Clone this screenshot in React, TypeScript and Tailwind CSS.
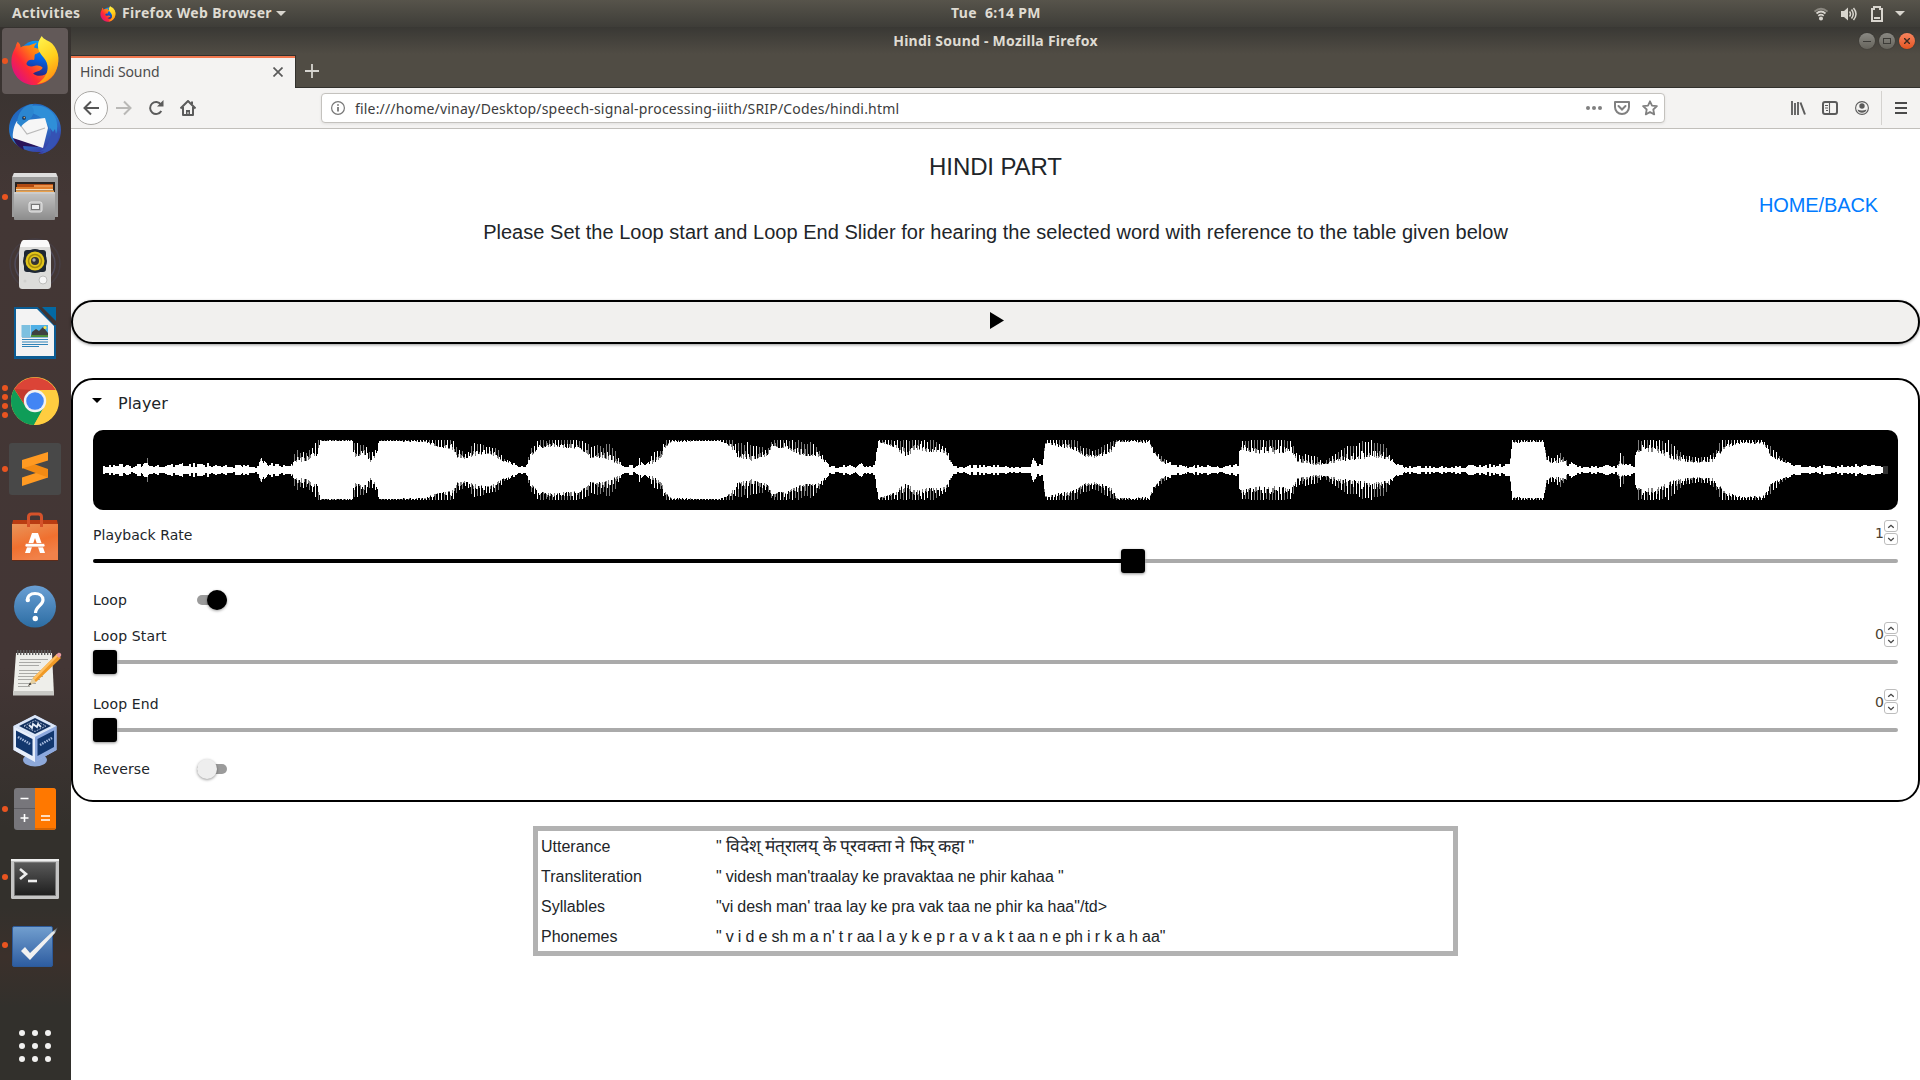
import React from "react";

const UI = "font-['Noto_Sans',sans-serif]";
const DJ = "font-['DejaVu_Sans',sans-serif]";

/* ---------- waveform ---------- */

// [x, body half-height, peak half-height]
const ENVELOPE: [number, number, number][] = [
  [10, 3, 5], [30, 2, 5], [50, 2.5, 6], [54, 5, 12], [58, 2.5, 5], [100, 2.5, 6], [127, 2.5, 6], [165, 2, 4], [167, 9, 13],
  [174, 3, 6], [197, 2, 5], [202, 8, 19], [212, 8, 16], [219, 11, 22], [224, 14, 28], [227, 29, 30], [259, 29, 30],
  [260, 13, 26], [272, 14, 25], [277, 7, 16], [283, 12, 21], [286, 29, 30], [330, 28, 30], [340, 24, 30], [359, 20, 30],
  [364, 12, 22], [372, 11, 15], [380, 14, 25], [396, 16, 23], [402, 12, 22], [410, 8, 12], [420, 5, 8], [426, 2, 4],
  [432, 2, 4], [437, 12, 19], [445, 22, 30], [460, 23, 30], [488, 20, 30], [496, 12, 23], [508, 12, 23], [517, 9, 25],
  [525, 5, 12], [533, 2, 4], [542, 2, 4], [546, 5, 11], [551, 2, 5], [562, 8, 18], [567, 10, 19], [572, 22, 30],
  [578, 28, 30], [626, 29, 30], [638, 22, 30], [643, 13, 25], [657, 9, 25], [674, 14, 20], [679, 22, 30], [693, 22, 30],
  [707, 14, 27], [722, 13, 25], [727, 12, 18], [733, 6, 8], [736, 2, 4], [762, 2, 4], [766, 4, 8], [772, 2, 4],
  [781, 2, 5], [785, 28, 30], [800, 22, 30], [812, 13, 30], [825, 20, 30], [838, 17, 29], [848, 18, 25], [853, 15, 21],
  [857, 8, 12], [860, 2, 4], [890, 2, 5], [910, 2, 4], [937, 1.5, 3], [940, 11, 14], [944, 3, 5], [949, 3, 5],
  [952, 26, 30], [982, 20, 30], [990, 13, 21], [1004, 12, 19], [1019, 18, 29], [1023, 28, 30], [1056, 27, 30],
  [1060, 17, 20], [1068, 8, 13], [1076, 4, 7], [1090, 2, 4], [1102, 2, 6], [1130, 2, 3], [1140, 3, 6], [1145, 3, 6],
  [1147, 20, 30], [1160, 16, 30], [1185, 16, 30], [1197, 18, 29], [1204, 8, 14], [1218, 5, 15], [1230, 5, 9],
  [1238, 6, 13], [1253, 9, 22], [1272, 11, 28], [1290, 11, 25], [1298, 8, 12], [1306, 3, 5], [1314, 1.5, 4],
  [1370, 1.5, 3], [1378, 4, 7], [1390, 2, 5], [1408, 3, 6], [1416, 3, 6], [1419, 27, 30], [1450, 28, 30], [1453, 10, 15],
  [1460, 5, 10], [1467, 8, 17], [1474, 4, 9], [1483, 2, 5], [1506, 1.5, 4], [1522, 1.5, 4], [1528, 6, 19], [1532, 2, 5],
  [1541, 2, 5], [1544, 18, 30], [1563, 18, 30], [1576, 11, 27], [1590, 8, 14], [1607, 7, 12], [1619, 8, 14],
  [1626, 14, 26], [1629, 20, 30], [1648, 27, 30], [1670, 25, 30], [1677, 14, 23], [1687, 8, 13], [1697, 3, 7],
  [1710, 2, 4], [1740, 2, 4], [1765, 2.5, 5], [1790, 2, 4],
];

function buildWave() {
  let seed = 7919;
  const rand = () => {
    seed = (seed * 1103515245 + 12345) & 0x7fffffff;
    return seed / 0x7fffffff;
  };
  let white = "";
  let gray = "";
  let seg = 0;
  let bead = 0;
  for (let x = 10; x < 1790; x++) {
    while (seg < ENVELOPE.length - 2 && ENVELOPE[seg + 1][0] <= x) seg++;
    const a = ENVELOPE[seg];
    const b = ENVELOPE[seg + 1];
    const t = (x - a[0]) / (b[0] - a[0]);
    const body = a[1] + (b[1] - a[1]) * t;
    const peak = a[2] + (b[2] - a[2]) * t;
    if (peak < 10) {
      // quiet passages: small rounded beads
      if (x % 2 === 0) bead = rand();
      const h = Math.round(body + (peak + 0.8 - body) * bead);
      white += `M${x} ${40 - h}h1v${h * 2}h-1z`;
      continue;
    }
    const pulse = x % 3 === 0 ? 0.9 + rand() * 0.3 : rand() * 0.6;
    const outer = Math.round(Math.min(30, body + (peak - body) * pulse));
    const inner = Math.round(body + (outer - body) * (rand() > 0.5 ? 1 : rand() * 0.5));
    white += `M${x} ${40 - inner}h1v${inner * 2}h-1z`;
    if (outer > inner) gray += `M${x} ${40 - outer}h1v${outer * 2}h-1z`;
  }
  return { white, gray };
}

const WAVE = buildWave();

function Waveform() {
  return (
    <svg width="1805" height="80" className="block rounded-[10px] bg-black" shapeRendering="crispEdges">
      <path d={WAVE.gray} fill="#808080" />
      <path d={WAVE.white} fill="#fff" />
      <rect x="1790" y="36" width="5" height="8" fill="#333" />
    </svg>
  );
}

/* ---------- launcher icons, each on a 52px grid ---------- */

function Svg({ children, size = 52, box = 52 }: { children: React.ReactNode; size?: number; box?: number }) {
  return (
    <svg width={size} height={size} viewBox={`0 0 ${box} ${box}`} className="block shrink-0 overflow-visible">
      {children}
    </svg>
  );
}

function Firefox({ size = 52, id }: { size?: number; id: string }) {
  return (
    <Svg size={size}>
      <defs>
        <linearGradient id={id + "a"} x1="0.1" y1="0.8" x2="0.9" y2="0.2">
          <stop offset="0" stopColor="#e0137a" />
          <stop offset="0.3" stopColor="#ff2a36" />
          <stop offset="0.6" stopColor="#ff7a16" />
          <stop offset="1" stopColor="#ffb800" />
        </linearGradient>
        <linearGradient id={id + "b"} x1="0.3" y1="0" x2="0.6" y2="1">
          <stop offset="0" stopColor="#fff14a" />
          <stop offset="0.5" stopColor="#ffcf1c" />
          <stop offset="1" stopColor="#ff8a12" />
        </linearGradient>
        <linearGradient id={id + "c"} x1="0.7" y1="0" x2="0.4" y2="1">
          <stop offset="0" stopColor="#0aa2fb" />
          <stop offset="0.5" stopColor="#0560df" />
          <stop offset="1" stopColor="#321a6c" />
        </linearGradient>
      </defs>
      <circle cx="27" cy="24" r="19" fill={`url(#${id}c)`} />
      <path d="M8 6c2 2 3 3 3 6 3-2 6-2 9-2 1-1 5-2 8-3-2 2-3 4-3 5 2 1 5 1 7 2 0 3-3 4-6 5-1 2 0 4-1 6-4-1-7 0-8 4 2 3 5 3 9 2 3-1 6 0 8 2-2 4-8 4-10 6 4 4 13 3 16-2 3-6 1-12-2-18L46 12c4 7 5 14 3 21-3 11-13 18-24 18C11 51 1 39 1.500 25.500 2 17 5 14 6 11c0-2 1-3 2-5z" fill={`url(#${id}a)`} />
      <path d="M33 0c2 4 8 5 11 8 8 9 8 20 3 29-4 8-11 12-19 13 8-5 12-12 11-19-1-9-10-11-10-21 0-4 2-7 4-10z" fill={`url(#${id}b)`} />
    </Svg>
  );
}

function Thunderbird() {
  return (
    <Svg>
      <defs>
        <linearGradient id="tb" x1="0.2" y1="0" x2="0.8" y2="1">
          <stop offset="0" stopColor="#1f5fb8" />
          <stop offset="0.5" stopColor="#2a7fd0" />
          <stop offset="1" stopColor="#3b2d9c" />
        </linearGradient>
      </defs>
      <path d="M16 3C22 0 30 0 36 3c9 4 16 13 16 24 0 10-5 17-12 21-4 2-7 3-11 3l3-2-4 0C16 49 8 43 4 38 1 34 0 30 0 26 0 16 6 7 16 3z" fill="url(#tb)" />
      <path d="M4 35c8 1 18 5 26 9l-16-1 1 4C9 44 6 40 4 35z" fill="#2a1458" />
      <path d="M14 8C20 0 38 0 45 12c6 10 3 22-4 30 1-8 1-14-2-20C34 13 22 9 14 8z" fill="#2f8fd8" />
      <path d="M8 18l28-3 3 10-5 20L4 35c-1-4 1-13 4-17z" fill="#f6f6f6" />
      <path d="M9 19l9 12 18-6" fill="none" stroke="#b9b9b9" strokeWidth="1.200" />
      <path d="M8 20C9 10 14 2 24 1l-1 3c3 2 2 8-2 12-3 3-8 5-9 8-1-2-3-3-4-4z" fill="#2b86d0" />
      <circle cx="15" cy="15" r="2" fill="#173f6e" />
      <circle cx="15.300" cy="14.600" r="0.800" fill="#d9a35a" />
      <path d="M36 45c5-5 6-13 5-20l3 4 2-3 1 5 3-3c1 10-5 20-18 23l3-3-5 1z" fill="#3552b4" />
    </Svg>
  );
}

function Files() {
  return (
    <Svg>
      <defs>
        <linearGradient id="fl" x1="0" y1="0" x2="0" y2="1">
          <stop offset="0" stopColor="#c4c4c4" />
          <stop offset="1" stopColor="#8c8c8c" />
        </linearGradient>
      </defs>
      <path d="M5 2h42l2 4v40H3V6z" fill="#9b9b9b" />
      <path d="M5 2h42l1.500 4h-45z" fill="#dedede" />
      <rect x="6" y="11" width="40" height="12" fill="#2a2320" />
      <rect x="8" y="13" width="36" height="4" fill="#b14a11" />
      <rect x="25" y="14" width="19" height="2" fill="#e8924b" />
      <rect x="7" y="16" width="37" height="3" fill="#e07d2b" />
      <rect x="7" y="18" width="37" height="1.500" fill="#f7dcb8" />
      <rect x="7" y="19.500" width="38" height="2" fill="#e9a04c" />
      <rect x="5" y="21" width="41" height="28" rx="1" fill="url(#fl)" />
      <path d="M5 22h41" stroke="#d6d6d6" />
      <rect x="20" y="31" width="13" height="10" rx="2" fill="#bdbdbd" stroke="#e8e8e8" />
      <rect x="22.500" y="33.500" width="8" height="5" fill="#f1f1f1" stroke="#777" />
    </Svg>
  );
}

function Rhythmbox() {
  return (
    <Svg>
      <circle cx="26" cy="25" r="25" fill="none" stroke="#4b4a5e" strokeWidth="1.500" opacity="0.350" />
      <circle cx="26" cy="25" r="20" fill="none" stroke="#5b5f80" strokeWidth="1.500" opacity="0.500" />
      <path d="M15 1h22c3 0 5 8 5 14v31c0 3-1 4-4 4H14c-3 0-4-1-4-4V15c0-6 2-14 5-14z" fill="#dcdcda" />
      <path d="M15 1h22c2 0 3 3 4 7H11c1-4 2-7 4-7z" fill="#fafafa" />
      <rect x="15" y="11" width="22" height="22" rx="3" fill="#1e2733" />
      <circle cx="26" cy="22" r="12" fill="#1e2733" />
      <circle cx="26" cy="22" r="9.500" fill="#e2c51b" />
      <circle cx="26" cy="22" r="6.500" fill="none" stroke="#a58c0b" strokeWidth="1.500" />
      <circle cx="26" cy="22" r="4" fill="#333" />
      <circle cx="25" cy="21" r="1.700" fill="#aaa" />
      <circle cx="34" cy="41" r="4" fill="#f6f6f6" stroke="#bdbdbb" />
      <circle cx="16" cy="42" r="1.500" fill="#cfcfcd" />
    </Svg>
  );
}

function Writer() {
  return (
    <Svg>
      <path d="M5 0h24l18 18v34H5z" fill="#0b5c93" />
      <path d="M33 0h14v14z" fill="#0369a3" />
      <path d="M29 0h3l15 15v3H45z" fill="#3d3433" />
      <path d="M7 2h21l17 17v30H7z" fill="#f3f3f3" />
      <g stroke="#2f83b8" strokeWidth="1">
        <path d="M13 21.500h8M13 23.500h8M13 25.500h8M13 27.500h8M13 30h26M13 32.500h26M13 35h26M13 37.500h26M13 39.500h17" />
      </g>
      <rect x="12.500" y="18" width="9" height="12" fill="#7cc0e0" />
      <rect x="22" y="18" width="17" height="12" fill="#4fb0e6" />
      <path d="M22 30l1-5 4-3 3 2 4-4 5 6v4z" fill="#3f4140" />
      <path d="M22 28h17v2H22z" fill="#4d8e3a" />
      <circle cx="36" cy="20.500" r="1.500" fill="#ffe645" />
    </Svg>
  );
}

function Chrome() {
  return (
    <Svg>
      <circle cx="26" cy="26" r="24" fill="#ffcd40" />
      <path d="M26 26L5.200 14A24 24 0 0 1 46.800 15H26z" fill="#db4437" />
      <path d="M5.200 14A24 24 0 0 0 25 50L35 32 17 32z" fill="#0f9d58" />
      <path d="M26 15h20.800A24 24 0 0 1 25 50l10.500-18.500z" fill="#ffcd40" />
      <path d="M5.200 14l10.500 16L26 15z" fill="#c33a2e" />
      <circle cx="26" cy="26" r="11.200" fill="#f1f1f1" />
      <circle cx="26" cy="26" r="8.800" fill="#4285f4" />
    </Svg>
  );
}

function Sublime() {
  return (
    <Svg>
      <rect width="52" height="52" rx="3" fill="#484848" />
      <path d="M13 34.500L39 26v8.500L13 43z" fill="#ff9a22" />
      <path d="M13 17v8l26 9.500V26L22 20z" fill="#f28a14" />
      <path d="M13 17L39 9v8.500L13 25.500z" fill="#ff9a22" />
    </Svg>
  );
}

function Software() {
  return (
    <Svg>
      <defs>
        <linearGradient id="sw" x1="0" y1="0" x2="0.4" y2="1">
          <stop offset="0" stopColor="#e9955a" />
          <stop offset="0.600" stopColor="#f0702f" />
          <stop offset="1" stopColor="#f1824a" />
        </linearGradient>
      </defs>
      <path d="M4 9h44l1 5H3z" fill="#b93c12" />
      <path d="M3 13h46v36H3z" fill="url(#sw)" />
      <path d="M19.500 16V6c0-2 1-3 3-3h7c2 0 3 1 3 3v10" fill="none" stroke="#d5522a" strokeWidth="3" />
      <path d="M3 49.500h46" stroke="#5d2a18" strokeWidth="1" />
      <path d="M23 22h6l7 20h-5l-5-15-5 15h-5z" fill="#fff" />
      <rect x="16" y="32.500" width="20" height="3.500" rx="1.700" fill="#fff" stroke="#ee7d4a" strokeWidth="0.800" />
    </Svg>
  );
}

function Help() {
  return (
    <Svg>
      <defs>
        <linearGradient id="hp" x1="0" y1="0" x2="0" y2="1">
          <stop offset="0" stopColor="#6a9fd4" />
          <stop offset="1" stopColor="#2c6da3" />
        </linearGradient>
      </defs>
      <circle cx="26" cy="27.500" r="21" fill="url(#hp)" />
      <path d="M18.500 22c-.5-5 3-7.500 7.500-7.500s8 2.500 8 6.500c0 5-7.500 6.500-7.500 13" fill="none" stroke="#fff" strokeWidth="3.200" />
      <circle cx="18.800" cy="21" r="2.200" fill="#fff" />
      <circle cx="26.300" cy="39.500" r="2.700" fill="#fff" />
    </Svg>
  );
}

function Gedit() {
  return (
    <Svg>
      <path d="M7 6h36l2 42H4z" fill="#eeeeea" />
      <path d="M4 44h41v4.500H4z" fill="#c9c9c5" />
      <g stroke="#a9a9a6" strokeWidth="1">
        <path d="M11 12.500h28M10 15.500h22M10 18.500h20M10 23.500h27M10 26.500h24M9 29.500h25M9 32.500h22M9 36.500h18M9 39.500h12" />
      </g>
      <path d="M8 5.500h34" stroke="#5c5c5c" strokeWidth="5" strokeDasharray="1.400 1.600" />
      <path d="M21 37l3-6L48 7l4 4-25 24z" fill="#f09a26" />
      <path d="M24 31L48 7l1.500 1.500L25.500 33z" fill="#ffc062" />
      <path d="M47 8l2-2c2-1 4 1 3 3l-2 2z" fill="#e89aa0" />
      <path d="M19 39l5-8 3 4z" fill="#e5cfa0" />
      <path d="M19 39l2-3.500 1.500 1.800z" fill="#333" />
    </Svg>
  );
}

function VirtualBox() {
  return (
    <Svg>
      <ellipse cx="26" cy="45" rx="12" ry="6.500" fill="#8ea9da" />
      <path d="M26 0l21.500 11v24L26 47 4.500 35V11z" fill="#a8bfe8" />
      <path d="M26 0l21.500 11L26 22 4.500 11z" fill="#dbe6f7" />
      <path d="M26 3l16 8L26 19 10 11z" fill="#12305e" />
      <path d="M15 11l11-5.500L37 11l-11 5.500z" fill="none" stroke="#c9d6ec" strokeWidth="0.800" strokeDasharray="2 1" />
      <path d="M20 10l3 3 1-4 4 3 1-3 3 3" fill="none" stroke="#e3ebf7" strokeWidth="1.800" />
      <path d="M4.500 11L26 22v25L4.500 35z" fill="#e8effb" />
      <path d="M7 15.500l16.500 8.500v17L7 32z" fill="#12376e" />
      <path d="M47.500 11L26 22v25l21.500-12z" fill="#8da9de" />
      <path d="M45 15.500L28.500 24v17L45 32z" fill="#12376e" />
      <path d="M9 22l12 7M31 30l12-7" stroke="#a9bde0" strokeWidth="2.500" strokeDasharray="1.500 1" />
    </Svg>
  );
}

function Calculator() {
  return (
    <Svg>
      <rect x="5" y="5" width="42" height="42" rx="3" fill="#77767b" />
      <path d="M26 5h18a3 3 0 0 1 3 3v36a3 3 0 0 1-3 3H26z" fill="#ff7800" />
      <path d="M26 46h20" stroke="#c65f06" strokeWidth="1.500" />
      <path d="M5 25.500h21" stroke="#5e5d62" strokeWidth="1" />
      <path d="M11.500 15.500h8M11.500 35h8M15.500 31v8M32 33h9M32 37h9" stroke="#fff" strokeWidth="1.600" />
    </Svg>
  );
}

function Terminal() {
  return (
    <Svg>
      <defs>
        <linearGradient id="tm" x1="0" y1="0" x2="0" y2="1">
          <stop offset="0" stopColor="#5a5a5a" />
          <stop offset="1" stopColor="#1e1e1e" />
        </linearGradient>
      </defs>
      <rect x="2" y="8" width="48" height="40" rx="1.500" fill="#c4c4c4" />
      <rect x="2" y="8" width="48" height="2" fill="#efefef" />
      <rect x="5.500" y="11.500" width="41" height="33" fill="url(#tm)" stroke="#777" />
      <path d="M11 18l6 5-6 5" fill="none" stroke="#eee" strokeWidth="2.600" />
      <path d="M19 30h9" stroke="#eee" strokeWidth="2.600" />
    </Svg>
  );
}

function Tasks() {
  return (
    <Svg>
      <defs>
        <linearGradient id="tk" x1="0" y1="0" x2="0" y2="1">
          <stop offset="0" stopColor="#729fcf" />
          <stop offset="1" stopColor="#2d5ca0" />
        </linearGradient>
        <linearGradient id="tc" x1="0.3" y1="0.7" x2="1" y2="0">
          <stop offset="0.5" stopColor="#f1f1f1" />
          <stop offset="0.8" stopColor="#dfe6ea" />
          <stop offset="1" stopColor="#5a7480" stopOpacity="0.2" />
        </linearGradient>
      </defs>
      <rect x="3.500" y="7.500" width="40" height="40" rx="1.500" fill="url(#tk)" stroke="#2d5a9a" />
      <path d="M12 32l4-4 5 6L43 13l6-5-3 6-25 27z" fill="url(#tc)" />
    </Svg>
  );
}

const LAUNCHER: { name: string; icon: React.ReactNode; dots: number; active?: boolean }[] = [
  { name: "Firefox", icon: <Firefox size={50} id="ff" />, dots: 1, active: true },
  { name: "Thunderbird", icon: <Thunderbird />, dots: 0 },
  { name: "Files", icon: <Files />, dots: 1 },
  { name: "Rhythmbox", icon: <Rhythmbox />, dots: 0 },
  { name: "Writer", icon: <Writer />, dots: 0 },
  { name: "Chrome", icon: <Chrome />, dots: 4 },
  { name: "Sublime Text", icon: <Sublime />, dots: 1 },
  { name: "Software", icon: <Software />, dots: 0 },
  { name: "Help", icon: <Help />, dots: 0 },
  { name: "Text Editor", icon: <Gedit />, dots: 0 },
  { name: "VirtualBox", icon: <VirtualBox />, dots: 0 },
  { name: "Calculator", icon: <Calculator />, dots: 1 },
  { name: "Terminal", icon: <Terminal />, dots: 1 },
  { name: "Tasks", icon: <Tasks />, dots: 1 },
];

function Launcher() {
  return (
    <nav className="flex w-[71px] shrink-0 flex-col bg-[linear-gradient(#36322f_0px,#433735_170px,#433635_640px,#33302c_800px,#33302c_880px,#3b302b_930px,#32302c_980px,#32302c_100%)] pt-px">
      <ul className="flex flex-col gap-[2px]">
        {LAUNCHER.map((item) => (
          <li
            key={item.name}
            className={
              "relative ml-[2px] flex h-[66px] w-[66px] items-center justify-center rounded-[4px] " +
              (item.active ? "bg-[#625958]" : "")
            }
          >
            {item.icon}
            <div className="absolute inset-y-0 left-0 flex flex-col justify-center gap-[3px]">
              {Array.from({ length: item.dots }, (_, i) => (
                <span key={i} className="size-[6px] rounded-full bg-[#e95420]" />
              ))}
            </div>
          </li>
        ))}
      </ul>
      <div className="mt-[52px] ml-[19px] grid w-8 grid-cols-3 gap-x-[7px] gap-y-[7px]">
        {Array.from({ length: 9 }, (_, i) => (
          <span key={i} className="size-[6px] rounded-full bg-[#f2f1f0]" />
        ))}
      </div>
    </nav>
  );
}

/* ---------- desktop panel ---------- */

function Caret() {
  return (
    <svg width="10" height="5" className="block">
      <path d="M0 0h10L5 5z" fill="#d8d5ce" />
    </svg>
  );
}

function TopPanel() {
  return (
    <header
      className={`flex h-[27px] shrink-0 items-center bg-linear-to-b from-[#57544b] to-[#3e3d38] pr-[15px] pl-3 text-[14px] leading-[24px] font-bold tracking-[0.35px] text-[#dfdbd2] ${UI}`}
    >
      <div className="flex w-[884px] items-center">
        <span className="mb-[2px] w-[88px] whitespace-nowrap">Activities</span>
        <Firefox size={16} id="fs" />
        <span className="mr-1 mb-[2px] ml-[6px] w-[150px] whitespace-nowrap">Firefox Web Browser</span>
        <Caret />
      </div>
      <div className="mb-[2px] w-[200px] text-center whitespace-pre">Tue  6:14 PM</div>
      <div className="flex flex-1 items-center justify-end">
        <svg width="14" height="14" viewBox="0 0 14 14" fill="none" stroke="#d8d5ce" strokeWidth="1.700">
          <path d="M.5 4.500Q7-1 13.500 4.500" stroke="#8a877f" />
          <path d="M2.500 6.500Q7 2.500 11.500 6.500M4.300 8.800Q7 6.500 9.700 8.800" />
          <circle cx="7" cy="11.500" r="1.200" fill="#d8d5ce" stroke="#d8d5ce" />
        </svg>
        <svg width="16" height="14" viewBox="0 0 16 14" className="ml-[13px]" fill="none" stroke="#d8d5ce" strokeWidth="1.500">
          <path d="M0 4h3l4-3.500v13L3 10H0z" fill="#d8d5ce" stroke="none" />
          <path d="M8.500 4.500q2 2.500 0 5M10.500 2.500q3.500 4.500 0 9M12.500 1q5 6 0 12" />
        </svg>
        <svg width="12" height="16" viewBox="0 0 12 16" className="ml-[14px]" fill="none" stroke="#d8d5ce" strokeWidth="2">
          <path d="M1 3h2V1h6v2h2v12H1zM3 12h6" />
        </svg>
        <span className="ml-3">
          <Caret />
        </span>
      </div>
    </header>
  );
}

/* ---------- browser chrome ---------- */

function WindowTitle() {
  return (
    <div className={`flex h-[28px] items-center text-[14px] font-bold tracking-[0.25px] text-[#dfdbd2] ${UI}`}>
      <div className="w-[61px]" />
      <div className="flex-1 text-center leading-[28px]">Hindi Sound - Mozilla Firefox</div>
      <div className="flex w-[61px] gap-1">
        <span className="flex size-4 items-center justify-center rounded-full bg-linear-to-b from-[#8a8983] to-[#66645c] shadow-[0_0_1px_#222]">
          <span className="h-px w-2 bg-[#3c3b37]" />
        </span>
        <span className="flex size-4 items-center justify-center rounded-full bg-linear-to-b from-[#8a8983] to-[#66645c] shadow-[0_0_1px_#222]">
          <span className="h-[6px] w-2 border border-[#3c3b37]" />
        </span>
        <span className="flex size-4 items-center justify-center rounded-full bg-linear-to-b from-[#f7845e] to-[#e4541d] shadow-[0_0_1px_#222]">
          <svg width="6" height="6" viewBox="0 0 6 6" stroke="#3c2a20" strokeWidth="1.400">
            <path d="M0 0l6 6M6 0L0 6" />
          </svg>
        </span>
      </div>
    </div>
  );
}

function TabStrip() {
  return (
    <div className={`flex h-[33px] border-b border-[#32312d] ${UI}`}>
      <div className="-mb-px flex w-[225px] items-center border-t border-r border-[#32312d] bg-[#f4f3f2]">
        <div className="flex h-full w-full items-center border-t-2 border-[#f2784f] pr-3 pl-[9px] text-[14px] text-[#4c4c4c]">
          <span className="-mt-1 flex-1 tracking-[-0.1px]">Hindi Sound</span>
          <svg width="10" height="10" viewBox="0 0 10 10" className="-mt-[2px]" stroke="#5a5a5a" strokeWidth="1.700">
            <path d="M.5.5l9 9M9.500.5l-9 9" />
          </svg>
        </div>
      </div>
      <svg width="14" height="14" viewBox="0 0 14 14" className="mt-[9px] ml-[9px]" stroke="#d6d4cf" strokeWidth="1.800">
        <path d="M7 0v14M0 7h14" />
      </svg>
    </div>
  );
}

function Toolbar() {
  return (
    <div className="flex h-[41px] items-center border-b border-[#c1bfbb] bg-[#f4f3f2] pl-[3px]">
      <span className="flex size-[34px] items-center justify-center rounded-full border border-[#a9a7a4] bg-[#fdfdfd]">
        <svg width="16" height="16" viewBox="0 0 16 16" fill="none" stroke="#555" strokeWidth="2">
          <path d="M16 8H1.500M8 1.500L1.500 8 8 14.500" />
        </svg>
      </span>
      <svg width="16" height="16" viewBox="0 0 16 16" className="ml-2" fill="none" stroke="#b9b8b6" strokeWidth="2">
        <path d="M0 8h14.500M8 1.500L14.500 8 8 14.500" />
      </svg>
      <svg width="16" height="16" viewBox="0 0 16 16" className="ml-4" fill="none" stroke="#5b5b5b" strokeWidth="2">
        <path d="M13.300 11A6 6 0 1 1 13 4.500" />
        <path d="M15.500 0v6.500H9z" fill="#5b5b5b" stroke="none" />
      </svg>
      <svg width="16" height="16" viewBox="0 0 16 16" className="ml-4" fill="none" stroke="#5b5b5b" strokeWidth="2">
        <path d="M.5 8.500L8 1l7.500 7.500M3 7v8h10V7" strokeLinejoin="round" />
        <path d="M12 1.500V4" />
        <path d="M6 15v-5h4v5H8.500v-3h-1v3z" fill="#5b5b5b" stroke="none" />
      </svg>
      <div className="ml-[125px] flex h-[30px] w-[1344px] items-center rounded-[4px] border border-[#c4c2be] bg-white pr-[6px] pl-[9px] shadow-[0_1px_3px_rgba(0,0,0,0.08)]">
        <svg width="14" height="14" viewBox="0 0 14 14" fill="none" stroke="#777">
          <circle cx="7" cy="7" r="6.400" strokeWidth="1.200" />
          <path d="M7 6v4.500M7 3.300v1.500" strokeWidth="1.800" />
        </svg>
        <span className={`ml-[10px] flex-1 text-[14px] tracking-[0.18px] text-[#3c3c3c] ${UI}`}>
          file:///home/vinay/Desktop/speech-signal-processing-iiith/SRIP/Codes/hindi.html
        </span>
        <svg width="16" height="4" viewBox="0 0 16 4" fill="#808080">
          <circle cx="2" cy="2" r="2" />
          <circle cx="8" cy="2" r="2" />
          <circle cx="14" cy="2" r="2" />
        </svg>
        <svg width="16" height="14" viewBox="0 0 16 14" className="ml-3" fill="none" stroke="#808080" strokeWidth="2">
          <path d="M1 1h14v5c0 4-3 7-7 7S1 10 1 6z" strokeLinejoin="round" />
          <path d="M4.500 5L8 8.500 11.500 5" strokeLinecap="round" />
        </svg>
        <svg width="16" height="16" viewBox="0 0 16 16" className="ml-3" fill="none" stroke="#808080" strokeWidth="1.800">
          <path d="M8 1.300l2 4.300 4.900.6-3.600 3.300.9 4.900L8 12l-4.200 2.400.9-4.900L1.100 6.200 6 5.600z" strokeLinejoin="round" />
        </svg>
      </div>
      <div className="ml-auto flex items-center pr-[13px]">
        <svg width="16" height="14" viewBox="0 0 16 14" stroke="#5b5b5b" strokeWidth="2">
          <path d="M2 0v14M5 2v12M8 1v13" strokeWidth="1.800" />
          <path d="M10.500 1.500L15 13.500" />
        </svg>
        <svg width="16" height="14" viewBox="0 0 16 14" className="ml-4" fill="none" stroke="#5b5b5b" strokeWidth="2">
          <rect x="1" y="1" width="14" height="12" rx="2" />
          <path d="M7.500 1v12M3 4.500h3M3 7h3M4 9.500h2" strokeWidth="1.100" />
        </svg>
        <svg width="14" height="14" viewBox="0 0 14 14" className="ml-[17px]" fill="none" stroke="#5b5b5b">
          <circle cx="7" cy="7" r="6.400" strokeWidth="1.100" />
          <circle cx="7" cy="5" r="2.700" fill="#5b5b5b" stroke="none" />
          <path d="M2.500 8.500q4.500 2 9 0-.8 3.300-4.500 3.300T2.500 8.500z" fill="#5b5b5b" stroke="none" />
        </svg>
        <span className="ml-3 h-[34px] w-px bg-[#d4d2cf]" />
        <svg width="12" height="12" viewBox="0 0 12 12" className="ml-[13px]" stroke="#4a4a4a" strokeWidth="2">
          <path d="M0 1h12M0 6h12M0 11h12" />
        </svg>
      </div>
    </div>
  );
}

/* ---------- page ---------- */

function Spinner({ value, raised }: { value: string; raised?: boolean }) {
  return (
    <div className={"flex items-start " + (raised ? "-mt-px" : "")}>
      <span className={"w-[9px] text-[14px] leading-6 text-[#4a4030] " + (raised ? "mt-px" : "")}>{value}</span>
      <span className="flex w-[14px] flex-col gap-px">
        {["M3.500 7L6.500 4.200 9.500 7", "M3.500 4L6.500 6.800 9.500 4"].map((d) => (
          <svg key={d} width="14" height="12" className="block rounded-[3px] border border-[#bdbdbd]" viewBox="0 0 13 10">
            <path d={d} fill="none" stroke="#444" strokeWidth="1.400" />
          </svg>
        ))}
      </span>
    </div>
  );
}

function Slider({
  label,
  value,
  fraction,
  raised,
  gap,
}: {
  label: string;
  value: string;
  fraction: number;
  raised?: boolean;
  gap: string;
}) {
  return (
    <div className={gap}>
      <div className="flex h-7 items-start justify-between">
        <span className={"text-[14px] leading-7 " + (fraction > 0 ? "tracking-[0.03px]" : "tracking-[0.15px]")}>{label}</span>
        <Spinner value={value} raised={raised} />
      </div>
      <div className="flex h-6 items-center">
        <span className="h-1 rounded-l-[2px] bg-black" style={{ width: `calc(${fraction} * (100% - 24px))` }} />
        <span className="size-6 shrink-0 rounded-[3px] bg-black shadow-[0_1px_3px_rgba(0,0,0,0.45)]" />
        <span className="h-1 flex-1 rounded-r-[2px] bg-[#aaa]" />
      </div>
    </div>
  );
}

function Toggle({ label, on, gap }: { label: string; on: boolean; gap: string }) {
  return (
    <div className={"flex h-5 items-center " + gap}>
      <span className="w-[104px] text-[14px] leading-5 tracking-[0.1px]">{label}</span>
      <span className={"flex h-[10px] w-[30px] items-center rounded-full bg-[#9b9b9b] " + (on ? "justify-end" : "justify-start")}>
        <span
          className={"size-5 shrink-0 rounded-full shadow-[0_1px_3px_rgba(0,0,0,0.4)] " + (on ? "bg-black" : "bg-[#eee]")}
        />
      </span>
    </div>
  );
}

const UTTERANCE = "विदेश् मंत्\u200Cरालय् के प्\u200Cरवक्ता ने फिर् कहा";

const TABLE: [string, React.ReactNode][] = [
  [
    "Utterance",
    <>
      {'" '}
      <span lang="hi" className="text-[17.3px] leading-none">
        {UTTERANCE}
      </span>
      {' "'}
    </>,
  ],
  ["Transliteration", "\" videsh man'traalay ke pravaktaa ne phir kahaa \""],
  ["Syllables", "\"vi desh man' traa lay ke pra vak taa ne phir ka haa\"/td>"],
  ["Phonemes", "\" v i d e sh m a n' t r aa l a y k e p r a v a k t aa n e ph i r k a h aa\""],
];

function Page() {
  return (
    <main className="flex-1 bg-white pt-[23px] font-['Liberation_Sans',sans-serif] text-[#212529]">
      <h4 className="h-[29px] text-center text-[24px] leading-[29px] tracking-[-0.1px]">HINDI PART</h4>
      <div className="mt-[9px] h-[30px] pr-[42px] text-right text-[20px] leading-[30px] tracking-[-0.12px] text-[#007bff]">
        HOME/BACK
      </div>
      <p className="h-6 text-center text-[20px] leading-6 tracking-[0.026px]">
        Please Set the Loop start and Loop End Slider for hearing the selected word with reference to the table given below
      </p>
      <button className="mt-[56px] flex h-[44px] w-full items-center justify-center rounded-[22px] border-2 border-black bg-[#f1f0ee] shadow-[0_1px_3px_rgba(0,0,0,0.4)]">
        <svg width="14" height="17" className="mb-[3px] ml-[3px]">
          <path d="M0 0l14 8.500L0 17z" />
        </svg>
      </button>
      <section className={`mt-[34px] h-[424px] rounded-[22px] border-2 border-black px-5 ${DJ}`}>
        <div className="mb-[3px] flex h-[47px] items-center">
          <svg width="10" height="5" className="-mt-[6px] -ml-px">
            <path d="M0 0h10L5 5z" />
          </svg>
          <span className="ml-4 text-[16px]">Player</span>
        </div>
        <Waveform />
        <Slider label="Playback Rate" value="1" fraction={0.5772} raised gap="mt-[11px]" />
        <Toggle label="Loop" on gap="mt-[17px]" />
        <Slider label="Loop Start" value="0" fraction={0} gap="mt-3" />
        <Slider label="Loop End" value="0" fraction={0} raised gap="mt-4" />
        <Toggle label="Reverse" on={false} gap="mt-[17px]" />
      </section>
      <div className="mt-6 ml-[462px] grid h-[130px] w-[925px] grid-cols-[175px_1fr] grid-rows-4 border-5 border-[#b2b2b2] pl-[3px] text-[16px] leading-[32px] [word-spacing:-0.37px]">
        {TABLE.map(([k, v]) => (
          <React.Fragment key={k}>
            <span className="h-[30px]">{k}</span>
            <span className="h-[30px] whitespace-nowrap">{v}</span>
          </React.Fragment>
        ))}
      </div>
    </main>
  );
}

export default function App() {
  return (
    <div className="flex h-[1080px] w-[1920px] flex-col overflow-hidden">
      <TopPanel />
      <div className="flex min-h-0 flex-1">
        <Launcher />
        <div className="flex min-w-0 flex-1 flex-col bg-[linear-gradient(#393834_0px,#504c44_27px)]">
          <WindowTitle />
          <TabStrip />
          <Toolbar />
          <Page />
        </div>
      </div>
    </div>
  );
}
